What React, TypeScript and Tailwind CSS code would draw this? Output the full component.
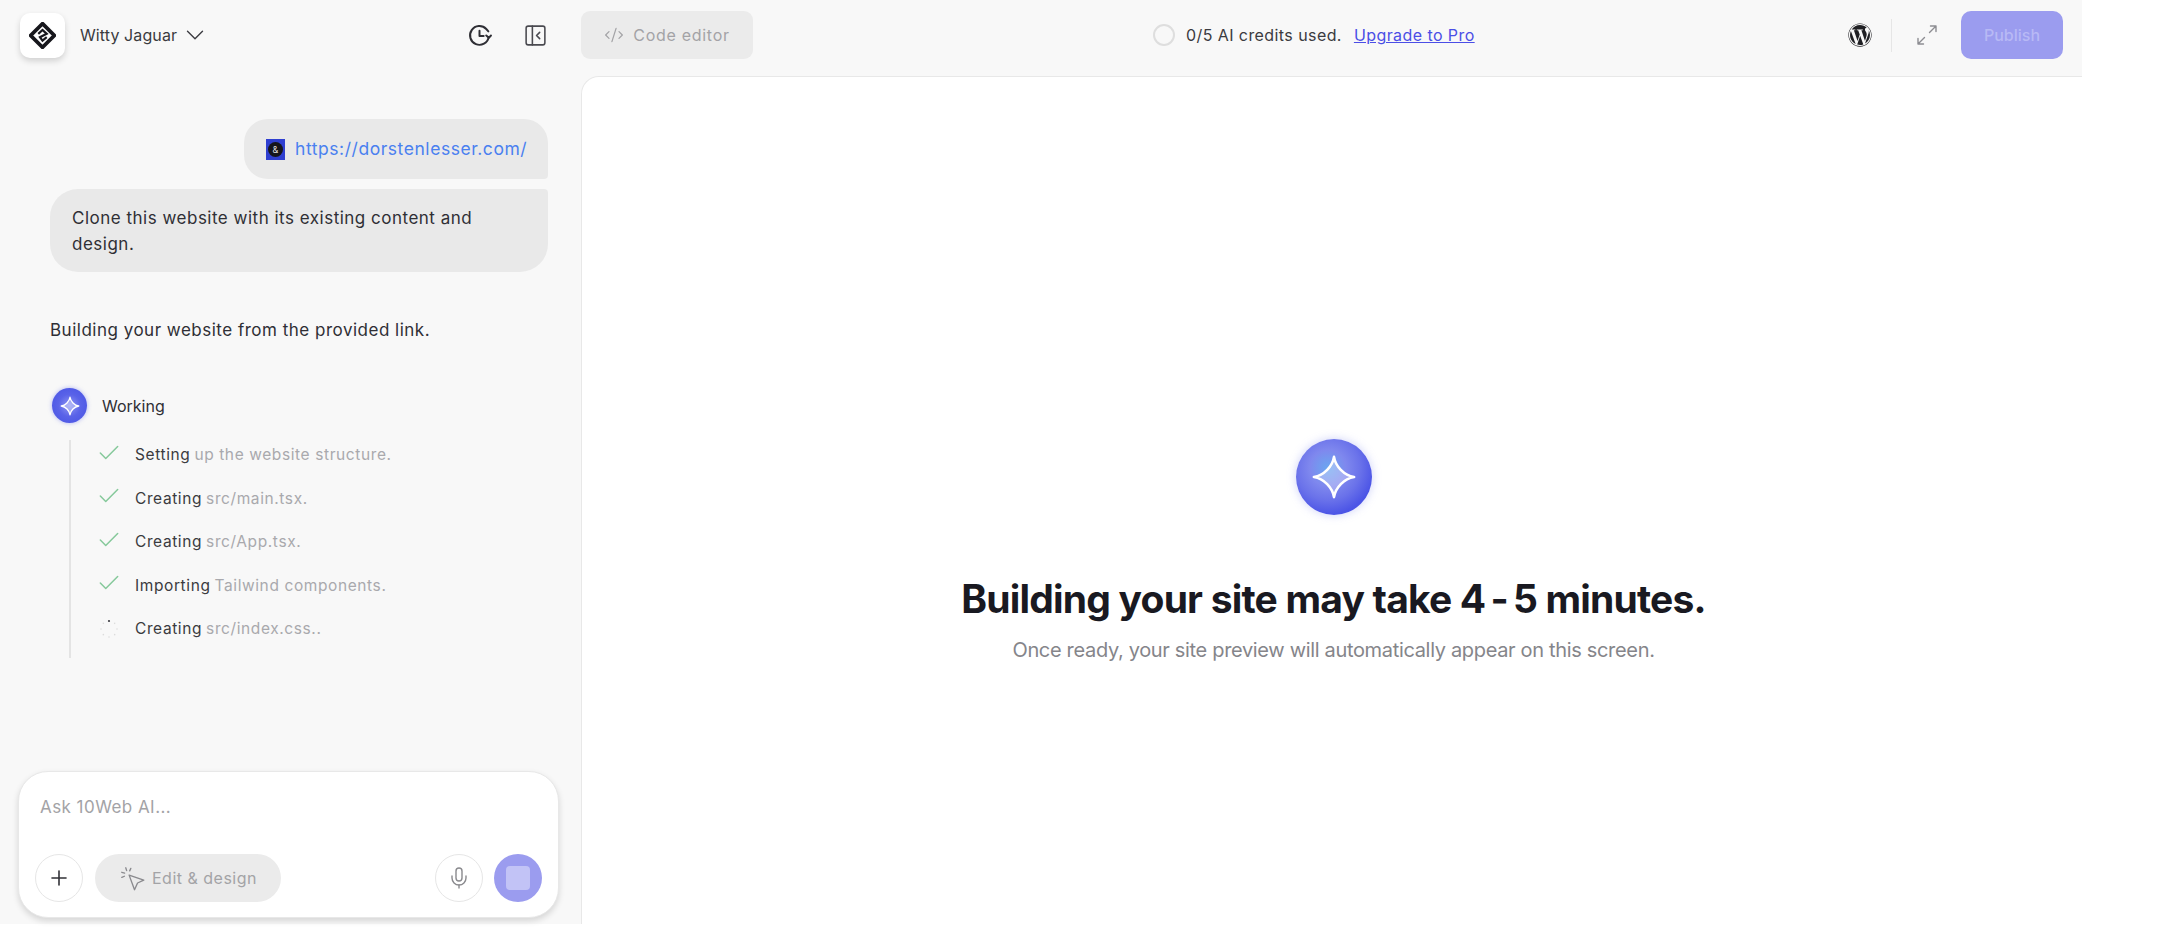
import React from "react";
import { Check, ChevronDown, CodeXml, Mic, PanelLeftClose, Plus } from "lucide-react";
import { FaWordpress } from "react-icons/fa";

const font = { fontFamily: '"Inter", "Liberation Sans", sans-serif' };

function Logo() {
  return (
    <svg viewBox="0 0 32 32" className="w-[27px] h-[27px]" fill="none">
      <path d="M16 2 L30 16 L16 30 L2 16 Z" stroke="#17171c" strokeWidth="4.4" strokeLinejoin="miter" />
      <path d="M11 14 L16 9.5 L21 14 L13 18 L16 22 L21 18" stroke="#17171c" strokeWidth="2.6" />
    </svg>
  );
}

function Sparkle({ size, stroke = 1.6 }: { size: number; stroke?: number }) {
  return (
    <svg viewBox="0 0 32 32" width={size} height={size} fill="rgba(255,255,255,0.3)" className="relative">
      <path d="M16 2 C17 8.5 23 15 30 16 C23 17 17 23.5 16 30 C15 23.5 9 17 2 16 C9 15 15 8.5 16 2 Z" stroke="white" strokeWidth={stroke} strokeLinejoin="round" />
    </svg>
  );
}

function HistoryIcon() {
  return (
    <svg viewBox="0 0 24 24" width="25" height="25" fill="none" stroke="#2f2f35" strokeWidth="1.9" strokeLinecap="round" strokeLinejoin="round">
      <path d="M20.8 13.5 A9 9 0 1 1 18.5 5.8 L20.5 8" />
      <path d="M12 7.5 V12.5 H16" />
      <path d="M18.5 12 L21 14.2 L23 12" />
    </svg>
  );
}

function ExpandIcon() {
  return (
    <svg viewBox="0 0 24 24" width="24" height="24" fill="none" stroke="#8d8d92" strokeWidth="1.4" strokeLinecap="round" strokeLinejoin="round">
      <path d="M14.5 9.5 L21 3 M15.5 3 H21 V8.5" />
      <path d="M9.5 14.5 L3 21 M3 15.5 V21 H8.5" />
    </svg>
  );
}

function PickIcon() {
  return (
    <svg viewBox="0 0 24 24" width="27" height="27" fill="none" stroke="#8a8a8e" strokeWidth="1.2" strokeLinecap="round" strokeLinejoin="round">
      <path d="M9 9 L22 13.5 L16.5 16 L13.8 22 Z" />
      <path d="M6 2.5 L6.8 5 M2.5 6.5 L5 7.2 M10.5 3 L9.5 5.2 M2.5 11 L4.8 10" />
    </svg>
  );
}

function Spinner() {
  const dots = [0, 45, 90, 135, 180, 225, 270, 315];
  return (
    <svg viewBox="0 0 20 20" width="20" height="20">
      {dots.map((a, i) => (
        <circle
          key={a}
          cx={10 + 8 * Math.sin((a * Math.PI) / 180)}
          cy={10 - 8 * Math.cos((a * Math.PI) / 180)}
          r={i === 0 ? 1.1 : 0.8}
          fill={i === 0 ? "#3a3a40" : "#dcdcdc"}
        />
      ))}
    </svg>
  );
}

const steps = [
  ["Setting", "up the website structure."],
  ["Creating", "src/main.tsx."],
  ["Creating", "src/App.tsx."],
  ["Importing", "Tailwind components."],
  ["Creating", "src/index.css.."],
];

export default function App() {
  return (
    <div className="w-[2158px] h-[934px] bg-white overflow-hidden" style={font}>
      <div className="w-[2082px] h-[924px] bg-[#f8f8f8] flex flex-col">
        <header className="h-[76px] shrink-0 flex items-center pb-[6px]">
          <div className="w-[581px] shrink-0 flex items-center pl-[20px] pr-[33px]">
            <div className="w-[45px] h-[45px] rounded-[10px] bg-white shadow-[0_3px_6px_rgba(0,0,0,0.16)] flex items-center justify-center">
              <Logo />
            </div>
            <span className="ml-[15px] text-[16px] tracking-[0.1px] text-[#3b3b40]">Witty Jaguar</span>
            <ChevronDown className="ml-[3px] w-[30px] h-[30px] text-[#3b3b40]" strokeWidth={1.1} />
            <div className="ml-auto flex items-center gap-[31px]">
              <HistoryIcon />
              <PanelLeftClose className="w-[25px] h-[25px] text-[#4a4a50]" strokeWidth={1.5} />
            </div>
          </div>
          <div className="w-[172px] h-[48px] rounded-[9px] bg-[#ebebeb] flex items-center justify-center gap-[9px] text-[16px] tracking-[0.7px] text-[#a3a3a6]">
            <CodeXml className="w-[20px] h-[20px]" strokeWidth={1.5} />
            <span>Code editor</span>
          </div>
          <div className="ml-[400px] flex items-center text-[16px] tracking-[0.42px]">
            <div className="w-[22px] h-[22px] rounded-full border-[2px] border-[#dedede]" />
            <span className="ml-[11px] text-[#3b3b40]">0/5 AI credits used.</span>
            <span className="ml-[12px] text-[#4b4ee6] underline">Upgrade to Pro</span>
          </div>
          <div className="ml-auto pr-[19px] flex items-center">
            <FaWordpress className="w-[24px] h-[24px] text-[#1f1f23]" />
            <div className="ml-[19px] w-px h-[33px] bg-[#e6e6e6]" />
            <div className="ml-[23px]"><ExpandIcon /></div>
            <div className="ml-[22px] w-[102px] h-[48px] rounded-[10px] bg-[#9b9cef] flex items-center justify-center text-[16px] font-medium text-[#b8b9f5]">Publish</div>
          </div>
        </header>
        <div className="flex-1 min-h-0 flex">
          <aside className="w-[581px] shrink-0 flex flex-col pb-[6px] relative">
            <div className="flex-1 pl-[50px] pr-[33px] pt-[43px] text-[#2f2f35]">
              <div className="flex flex-col items-end gap-[10px]">
                <div className="h-[60px] w-[304px] rounded-[24px] rounded-br-[4px] bg-[#e9e9e9] flex items-center pl-[22px]">
                  <div className="w-[19px] h-[21px] bg-[#2f3fd0] flex items-center justify-center">
                    <div className="w-[15px] h-[15px] rounded-full bg-[#16161c] text-[9px] leading-[15px] text-center text-[#ddd]">&</div>
                  </div>
                  <span className="ml-[10px] text-[17.5px] tracking-[0.55px] text-[#4a80f0]">https://dorstenlesser.com/</span>
                </div>
                <div className="w-full h-[83px] rounded-[28px] rounded-tr-[4px] bg-[#e9e9e9] pl-[22px] pr-[50px] flex items-center text-[17px] leading-[26px] tracking-[0.5px]">
                  <p>Clone this website with its existing content and design.</p>
                </div>
              </div>
              <p className="mt-[45px] text-[17px] leading-[26px] tracking-[0.5px]">Building your website from the provided link.</p>
              <div className="mt-[45px] flex items-center">
                <div className="ml-[2px] w-[35px] h-[35px] rounded-full bg-[radial-gradient(circle_at_50%_50%,#8f97f2_0%,#5a63e8_45%,#4450e4_100%)] shadow-[0_0_4px_rgba(100,110,240,0.5)] flex items-center justify-center">
                  <Sparkle size={20} stroke={2.2} />
                </div>
                <span className="ml-[15px] text-[16px]">Working</span>
              </div>
              <div className="ml-[19px] mt-[17px] w-[430px] h-[218px] border-l-[2px] border-[#e4e4e4] pl-[28px] flex flex-col gap-[19.5px] pt-[3px]">
                {steps.map(([a, b]) => (
                  <div key={a + b} className="flex items-center h-[24px] text-[15.5px] tracking-[0.6px]">
                    <div className="w-[20px] flex justify-center">
                      {b.endsWith("..") ? <Spinner /> : <Check className="w-[26px] h-[26px] shrink-0 text-[#86c99b] -mt-[5px]" strokeWidth={1.4} />}
                    </div>
                    <span className="ml-[16px] text-[#3b3b40]">{a}</span>
                    <span className="ml-[4px] text-[#a9a9ad]">{b}</span>
                  </div>
                ))}
              </div>
            </div>
            <div className="mx-[18px] mr-[22px] h-[147px] rounded-[30px] bg-white border border-[#e8e8e8] shadow-[0_3px_6px_rgba(0,0,0,0.14)] flex flex-col justify-between pt-[23px] pb-[15px] px-[16px]">
              <div className="pl-[5px] text-[17px] tracking-[0.45px] text-[#a3a3a6]">Ask 10Web AI...</div>
              <div className="flex items-center">
                <div className="w-[48px] h-[48px] rounded-full border border-[#e6e6e6] flex items-center justify-center text-[#303036]">
                  <Plus className="w-[24px] h-[24px]" strokeWidth={1.6} />
                </div>
                <div className="ml-[12px] w-[186px] h-[48px] rounded-full bg-[#ebebeb] flex items-center justify-center gap-[6px] text-[16px] tracking-[0.5px] text-[#a3a3a6]">
                  <PickIcon />
                  <span>Edit &amp; design</span>
                </div>
                <div className="ml-auto w-[48px] h-[48px] rounded-full border border-[#e6e6e6] flex items-center justify-center">
                  <Mic className="w-[24px] h-[24px] text-[#8a8a8e]" strokeWidth={1.4} />
                </div>
                <div className="ml-[11px] w-[48px] h-[48px] rounded-full bg-[#9b9cef] flex items-center justify-center">
                  <div className="w-[24px] h-[24px] rounded-[4px] bg-[#c2c3f6]" />
                </div>
              </div>
            </div>
          </aside>
          <main className="flex-1 bg-white rounded-tl-[18px] border-l border-t border-[#e8e8e8] flex flex-col items-center pt-[362px]">
            <div className="ml-[3px] w-[76px] h-[76px] rounded-full bg-[radial-gradient(circle_at_42%_38%,#6aa7f0_0%,#7f88ee_28%,#6a72ea_50%,#4c55e6_72%,#4650e2_100%)] shadow-[0_0_10px_rgba(130,140,240,0.4)] flex items-center justify-center">
              <Sparkle size={46} stroke={1.8} />
            </div>
            <h1 className="mt-[60px] ml-[3px] text-[39px] leading-[48px] font-bold text-[#191921] tracking-[-0.8px]">Building your site may take 4<span className="mx-[5px]">-</span>5 minutes.</h1>
            <p className="mt-[13px] ml-[3px] text-[20px] leading-[28px] tracking-[-0.33px] text-[#85858a]">Once ready, your site preview will automatically appear on this screen.</p>
          </main>
        </div>
      </div>
    </div>
  );
}
